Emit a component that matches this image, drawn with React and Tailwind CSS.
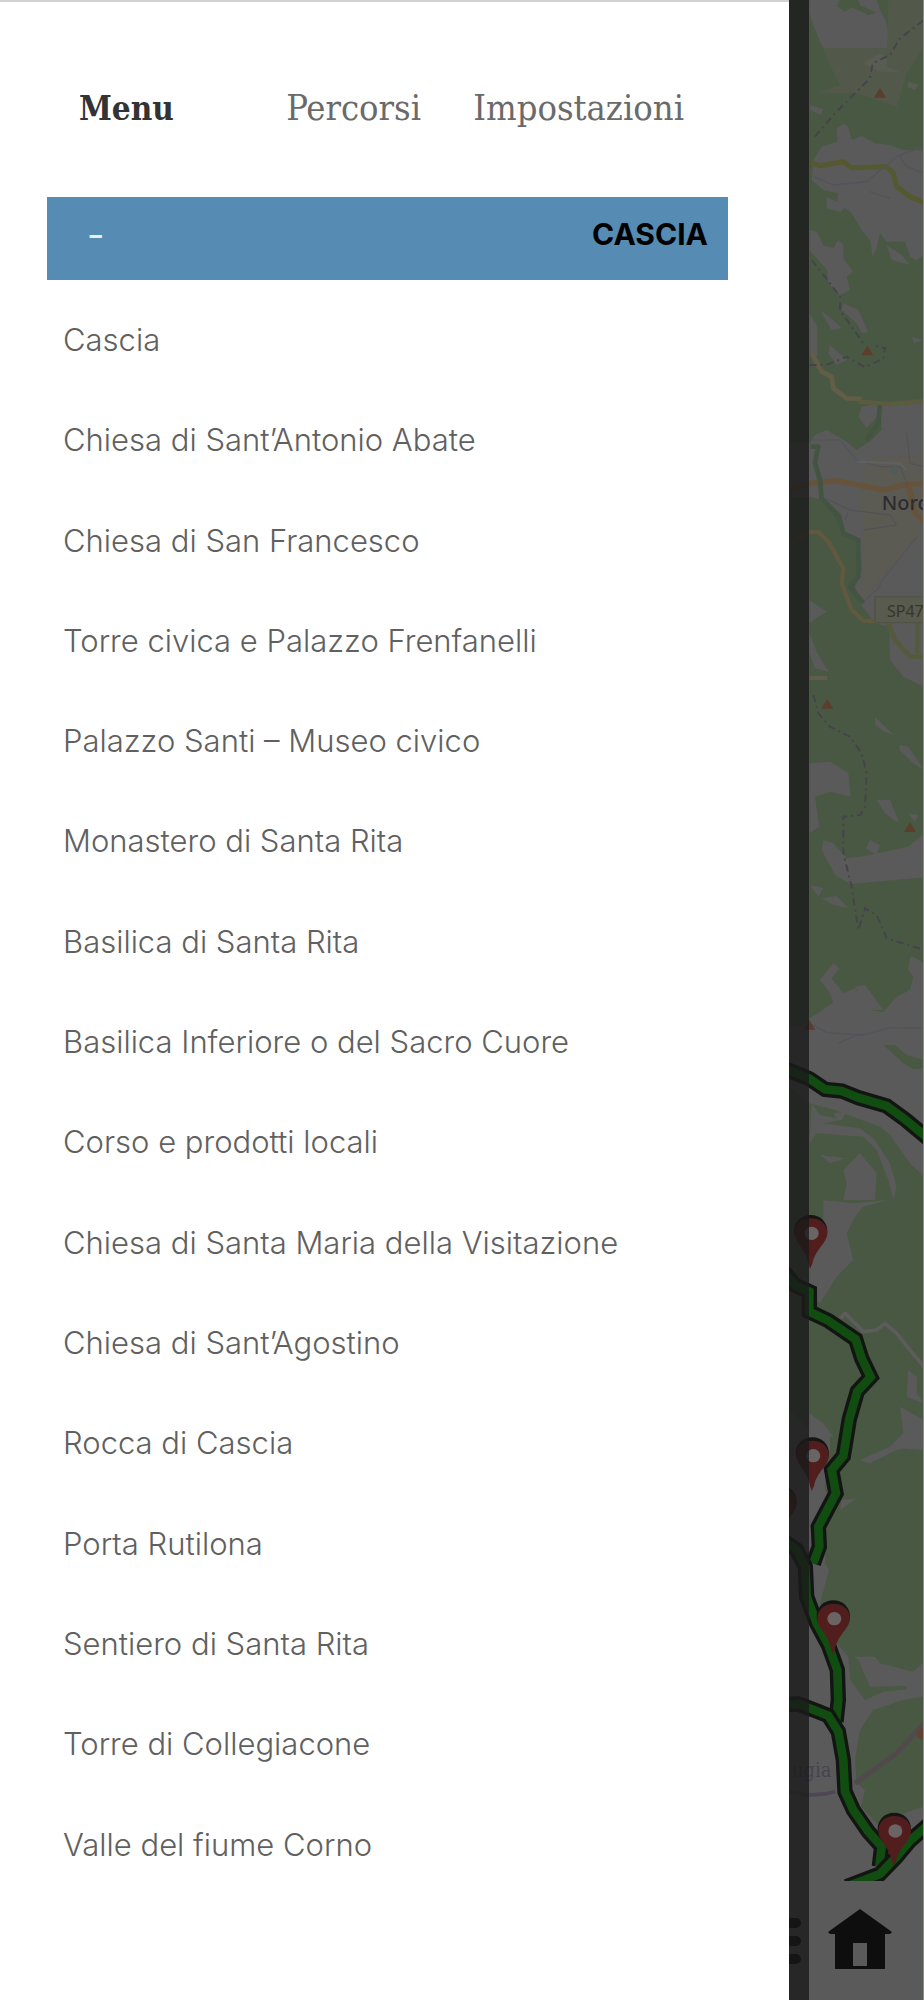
import { useState } from "react";

const tabs = [
  { id: "menu", label: "Menu" },
  { id: "percorsi", label: "Percorsi" },
  { id: "impostazioni", label: "Impostazioni" },
];

const luoghi = [
  "Cascia",
  "Chiesa di Sant’Antonio Abate",
  "Chiesa di San Francesco",
  "Torre civica e Palazzo Frenfanelli",
  "Palazzo Santi – Museo civico",
  "Monastero di Santa Rita",
  "Basilica di Santa Rita",
  "Basilica Inferiore o del Sacro Cuore",
  "Corso e prodotti locali",
  "Chiesa di Santa Maria della Visitazione",
  "Chiesa di Sant’Agostino",
  "Rocca di Cascia",
  "Porta Rutilona",
  "Sentiero di Santa Rita",
  "Torre di Collegiacone",
  "Valle del fiume Corno",
];

function Pin({ x, y }) {
  return (
    <g transform={`translate(${x} ${y})`}>
      <path
        d="M0 -104C-28 -104 -50 -84 -50 -55C-50 -28 -12 -22 -5 0H5C12 -22 50 -28 50 -55C50 -84 28 -104 0 -104Z"
        fill="#151515"
      />
      <path
        d="M0 -94C-26 -94 -48 -76 -48 -50C-48 -20 -14 -2 -7 42L-2 57L5 42C14 -2 50 -20 50 -50C50 -76 28 -94 0 -94Z"
        fill="#521d1d"
      />
      <ellipse cx="3" cy="-49" rx="21" ry="20" fill="#6b6464" />
    </g>
  );
}

function Cima({ x, y }) {
  return <path d={`M${x} ${y - 15}L${x + 18} ${y + 14}H${x - 18}Z`} fill="#5b3e2c" />;
}

function Percorso({ d }) {
  return (
    <>
      <path d={d} fill="none" stroke="#131513" strokeWidth="46" strokeLinejoin="miter" />
      <path d={d} fill="none" stroke="#114c11" strokeWidth="26" strokeLinejoin="miter" />
    </>
  );
}

function Mappa() {
  return (
    <svg
      className="absolute inset-0 h-full w-full"
      viewBox="27 0 405 5643"
      preserveAspectRatio="xMinYMin slice"
      aria-label="Mappa"
    >
      <rect x="27" width="405" height="5643" fill="#5a5a5a" />

      {/* Boschi */}
      <g fill="#495843">
        <path d="M0 0H88V40L100 75L118 120L130 145H322L325 100L318 65L300 30L290 0H432V450L370 450L330 435L285 430L245 408L215 420L205 380L190 372L170 385L172 425L125 440L100 480L95 540L130 570L175 580L170 605L215 640L245 690L270 720L278 770L290 745L300 700L320 725L375 725L390 770L410 780L432 765V1200H0Z" />
        <path d="M180 0L170 18L195 35L215 22L265 45L290 38L240 15L235 0Z" />
        <path d="M0 1200H432V1210H300L245 1220L235 1250L260 1285L300 1240L305 1290L275 1320L230 1350L200 1325L140 1290L105 1305L88 1330H0Z" />
        <path d="M0 1490L88 1490L145 1505L185 1545L195 1595L240 1620L245 1710L225 1760L240 1810L285 1870L328 1880L330 1980L370 2030L432 2060V2890L350 2840L325 2845L270 2790L225 2755L215 2800L170 2750L120 2730L150 2815L88 2855L0 2900Z" />
        <path d="M0 2700H330L432 2780V2870L390 2870L385 2910L400 2930L390 2970L350 2990L310 3035L265 3030L225 2965L190 2980L170 3000L120 3035L88 3055L70 3080H0Z" />
        <path d="M310 3135L345 3135L380 3165L432 3180V3205L400 3208L370 3190Z" />
        <path d="M0 3240L88 3310L165 3330L205 3345L300 3380L380 3445L432 3520V4300L370 4325L290 4370L240 4385L205 4480L165 4575L148 4700L160 4730L135 4690L140 4580L190 4480L150 4400L150 4310L88 4290L0 4200Z" />
        <path d="M135 4380L190 4280L300 4340L432 4350V4985L400 5015L300 4990L285 4970H205L170 4930L120 4810L150 4700L135 4600Z" />
        <path d="M205 4955L235 4980L270 5060L378 5058L380 5068L310 5075L255 5100L210 5040Z" />
        <path d="M432 5090L370 5100L280 5130L240 5190L225 5280L230 5350L255 5370L243 5420L300 5480L340 5450L432 5420Z" />
      </g>

      {/* Radure e prati */}
      <path d="M325 0H432V140L380 220L350 320L230 280H110L180 255L150 195L130 145H322Z" fill="#52594a" />
      <path d="M250 190L300 160L320 170L320 200L360 215L300 215ZM385 245L415 255L405 270L383 262Z" fill="#595c53" />
      <path d="M285 1370L250 1410L240 1500L250 1570L245 1810L300 1740L410 1620L432 1560V1370Z" fill="#5b5a53" />
      <g fill="#5a5a5a">
        <path d="M88 315L130 328L122 345L90 330ZM88 690L110 695L130 735L160 745L175 720L190 735L190 775L220 815L200 830L210 870L180 885L145 850L142 810L88 750Z" />
        <path d="M190 910L235 930L265 995L245 1000L230 970L185 930ZM120 930L160 960L185 985L155 990ZM88 940L112 980V1070L88 1060ZM150 1035L200 1080L170 1095L145 1060Z" />
        <path d="M320 735L365 765L390 795L335 780ZM395 1010L430 1020L400 1030ZM140 590L200 620L180 635L140 625Z" />
        <path d="M88 1800L140 1835L115 1850L88 1870ZM88 1900L110 1955L145 2015L105 2005L88 1960ZM285 2150L340 2205L315 2195L285 2175ZM360 2235L385 2240L432 2310L400 2290L358 2250Z" />
        <path d="M88 2290L150 2285L205 2320L212 2390L150 2375L105 2390L118 2480L88 2500ZM290 2400H330L355 2460L350 2465L315 2440ZM385 2440L415 2445L405 2465Z" />
        <path d="M130 2520L160 2530L200 2575L240 2570L385 2540L432 2500V2632L210 2652L165 2625L125 2550ZM270 2520L300 2535L290 2565L258 2545ZM90 2655L130 2665L115 2690ZM125 2695L170 2688L205 2725L160 2715Z" />
        <path d="M120 2940L160 2890L178 2905L155 2935L190 2980L170 3040L150 2980ZM225 2960L255 2955L310 3030L260 3030Z" />
        <path d="M95 3310L120 3345L170 3355L160 3340L200 3335L185 3360L130 3370L240 3385L285 3420L330 3490L350 3560L340 3600L325 3540L290 3450L250 3410L110 3400L88 3430Z" />
        <path d="M190 3510L240 3460L290 3520L285 3600H190L200 3550ZM120 3465L195 3475L150 3490ZM330 3405L380 3430L432 3500V3530L390 3490Z" />
        <path d="M130 3600L220 3610L325 3600L250 3620L225 3650L200 3700L220 3780L170 3830L120 3910L88 3880V3780L130 3720ZM385 4110L410 4130V4180L432 4210L380 4190ZM360 4220L432 4260V4330L350 4350L270 4390L240 4380L330 4340L370 4300ZM88 4240L130 4270L160 4310L88 4310Z" />
        <path d="M120 4420L160 4540L105 4610L88 4580V4420ZM185 4500L230 4495L180 4530Z" />
      </g>

      {/* Strade */}
      <g fill="none" strokeLinejoin="round">
        <path d="M88 488L120 497L190 485L215 503L320 500L340 520L350 560L390 590L432 608" stroke="#54592f" strokeWidth="15" />
        <path d="M95 1060L125 1115L155 1130L160 1165L200 1195L245 1197" stroke="#625d47" strokeWidth="14" />
        <path d="M235 1205L330 1212L432 1203" stroke="#5b5b40" strokeWidth="13" />
        <path d="M27 1470L90 1450L170 1442L235 1455L310 1470L370 1455L432 1450M385 1455L405 1540L432 1565" stroke="#66533a" strokeWidth="16" />
        <path d="M27 1635L88 1596H115L145 1625L190 1705L185 1750L215 1830L250 1862L320 1865" stroke="#60583f" strokeWidth="13" />
        <path d="M320 1860L345 1920L390 1970H432M412 1800V1960" stroke="#555a3c" strokeWidth="14" />
        <path d="M88 2034H142" stroke="#605d4a" strokeWidth="12" />
        <path d="M88 1320L180 1320L230 1380L300 1400L360 1400L385 1460M125 1490L210 1530L330 1545L350 1575L250 1590M205 1535L195 1560M410 1610L300 1750L300 1760L245 1810M432 1400L390 1390L380 1300" stroke="#50525a" strokeWidth="3" />
        <path d="M230 1385L360 1390L380 1410" stroke="#606060" strokeWidth="7" />
        <path d="M92 1340L115 1340L105 1390L120 1440L125 1500M300 1215L295 1270L260 1320M130 1500L175 1550L190 1600L235 1620L235 1730L210 1760L250 1810" stroke="#435442" strokeWidth="14" />
        <path d="M88 3070L140 3098L250 3105L330 3083L432 3085M175 3130L230 3105M100 530L160 555L260 545L350 470L432 438M360 470L380 500L432 520M270 575L330 595" stroke="#52545b" strokeWidth="4" />
        <path d="M180 3955L195 3940L215 3960L250 3995L290 3990L315 3970L350 4000L390 4050L432 4100" stroke="#5d5b5c" strokeWidth="11" />
        <path d="M225 5350L350 5260L432 5170" stroke="#514a4c" strokeWidth="15" />
        <path d="M27 5374C70 5388 110 5390 165 5375" stroke="#4e4654" strokeWidth="11" />
      </g>

      {/* Confini */}
      <g fill="none" stroke="#45444a" strokeWidth="6" strokeDasharray="22 12 6 12">
        <path d="M105 410L165 340L270 235L278 190L330 165L360 115L432 60" />
        <path d="M95 780L150 850L180 890L180 930L215 980L250 1030M88 1095H140L200 1070L255 1102L310 1075L315 1045L280 1035" />
        <path d="M100 2085L115 2140L150 2180L210 2210L245 2260L260 2320L255 2420L240 2445L190 2450V2560L215 2660L235 2790L255 2725L290 2745L320 2815L432 2850" />
      </g>

      <Cima x={300} y={279} />
      <Cima x={262} y={1052} />
      <Cima x={142} y={2112} />
      <Cima x={390} y={2482} />
      <Cima x={88} y={3075} />
      <circle cx="426" cy="5202" r="16" fill="#643f33" />
      <circle cx="342" cy="1410" r="12" fill="#505c5b" />

      <text x="305" y="1530" fontSize="60" fontWeight="500" fill="#2c2c30" fontFamily="Noto Sans, sans-serif">
        Norc
      </text>
      <rect x="285" y="1790" width="170" height="78" rx="5" fill="#595b4e" stroke="#505345" strokeWidth="4" />
      <text x="321" y="1850" fontSize="48" fill="#343629" fontFamily="Noto Sans, sans-serif">
        SP47
      </text>
      <text x="36" y="5330" fontSize="60" fill="#45454f" fontFamily="DejaVu Serif Condensed, DejaVu Serif, serif">
        ugia
      </text>

      <Percorso d="M0 3200L88 3236L135 3268L185 3273L235 3293L320 3318L375 3358L450 3420" />
      <Percorso d="M0 3800L45 3856L88 3875V3935L145 3962L227 4018L245 4075L272 4131L232 4174L208 4257L190 4368L155 4410L168 4480L115 4580L118 4640L100 4690" />
      <Percorso d="M0 4615L50 4650L76 4700L80 4790L110 4870L145 4935L172 5010L175 5100L168 5165" />
      <Percorso d="M0 5115L55 5112L110 5133L145 5147L175 5195L190 5280L195 5375L220 5430L265 5495L305 5540L298 5600" />
      <Percorso d="M200 5660L300 5622L350 5570L390 5522L450 5470" />

      <Pin x={92} y={3749} />
      <Pin x={97} y={4416} />
      <Pin x={0} y={4560} />
      <Pin x={160} y={4905} />
      <Pin x={343} y={5542} />
    </svg>
  );
}

function Casa() {
  return (
    <svg className="h-[60px] w-16" viewBox="0 0 64 60" aria-hidden="true">
      <path d="M32 0L64 23L62 25H57V60H7V25H2L0 23Z" fill="#0e0e0e" />
      <path d="M25 34H39V57H25Z" fill="#5a5a5a" />
    </svg>
  );
}

export default function App() {
  const [tab, setTab] = useState("menu");
  const [aperto, setAperto] = useState(true);

  return (
    <div className="flex min-h-screen bg-white">
      {/* Pannello laterale */}
      <aside className="flex min-w-0 flex-1 flex-col border-t-2 border-[#d2d2d0] bg-white pr-[61px] pb-[105px] pl-[47px]">
        <nav className="flex h-[195px] items-center justify-between pt-4 pr-11 pl-8 font-['DejaVu_Serif_Condensed','DejaVu_Serif',serif] text-[36px] text-[#6a6a6a]">
          {tabs.map((t) => (
            <button
              key={t.id}
              onClick={() => setTab(t.id)}
              className={t.id === "menu" ? "w-[155px] text-left" : "text-left"}
            >
              <span className={tab === t.id ? "text-[33px] font-bold text-[#333]" : ""}>
                {t.label}
              </span>
            </button>
          ))}
        </nav>

        <button
          onClick={() => setAperto(!aperto)}
          aria-expanded={aperto}
          className="flex h-[83px] items-center justify-between bg-[#568bb3] pr-5 pb-2 pl-10 font-['Inter',sans-serif] text-[30px]"
        >
          <span className="font-['Lato',sans-serif] font-black text-[#e8f0f6]">
            {aperto ? "–" : "+"}
          </span>
          <span className="font-bold text-black">CASCIA</span>
        </button>

        {aperto && (
          <ul className="flex flex-1 flex-col pt-2.5 pl-4 font-['Inter',sans-serif] text-[31px] font-light text-[#606060]">
            {luoghi.map((nome) => (
              <li key={nome} className="flex min-h-16 flex-1 items-center">
                <a href="#">{nome}</a>
              </li>
            ))}
          </ul>
        )}
      </aside>

      {/* Mappa oscurata dietro al pannello */}
      <main className="relative flex w-[135px] shrink-0 flex-col border-r border-[#8a8f88] bg-[#5a5a5a]">
        <div className="relative flex-1 overflow-hidden">
          <Mappa />
        </div>
        <footer className="flex h-[119px] items-center justify-between pr-[31px]">
          <button aria-label="Menu" className="flex flex-col gap-2">
            <span className="h-[10px] w-3 rounded-r-full bg-black" />
            <span className="h-[10px] w-3 rounded-r-full bg-black" />
            <span className="h-[10px] w-3 rounded-r-full bg-black" />
          </button>
          <button aria-label="Home" className="pb-1">
            <Casa />
          </button>
        </footer>
        <div className="absolute inset-y-0 left-0 w-5 bg-[#1a1a1a]/80" />
      </main>
    </div>
  );
}
